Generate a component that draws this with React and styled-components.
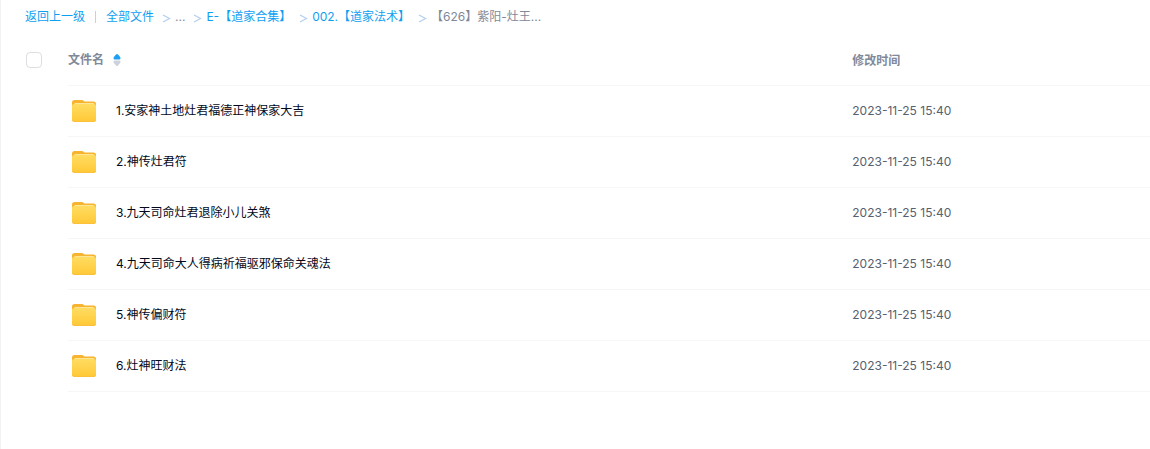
import React from 'react'
import styled, { createGlobalStyle } from 'styled-components'

const GlobalStyle = createGlobalStyle`
    body {
        margin: 0;
        background: #fff;
        font-family: Inter, "Noto Sans CJK SC", sans-serif;
        font-size: 12px;
        line-height: 18px;
    }
`;
const Page = styled.main`
    box-sizing: border-box;
    min-height: 100vh;
    border-left: 1px solid #f1f2f4;
`;
const Breadcrumb = styled.nav`
    display: flex;
    align-items: center;
    height: 34px;
    padding-left: 24px;
    white-space: nowrap;
`;
const Crumb = styled.a`
    color: #0f9ff2;
    text-decoration: none;
`;
const Current = styled.span`
    color: #818999;
`;
const Divider = styled.span`
    width: 1px;
    height: 12px;
    margin: 0 10px;
    background: #b9d3f2;
`;
const Arrow = styled.svg`
    flex: none;
    margin: 2px 4px 0 8px;
    color: #b4d0ee;
`;
const FileTable = styled.table`
    width: 100%;
    table-layout: fixed;
    border-collapse: separate;
    border-spacing: 0;
`;
const CheckCol = styled.col`
    width: 67px;
`;
const TimeCol = styled.col`
    width: 26%;
`;
const HeadCell = styled.th`
    height: 51px;
    padding: 0;
    border-bottom: ${props => props.$plain ? 'none' : '1px solid #f5f6f8'};
    color: #818999;
    font-weight: 600;
    text-align: left;
`;
const Cell = styled.td`
    height: 50px;
    padding: 0;
    border-bottom: ${props => props.$plain ? 'none' : '1px solid #f5f6f8'};
    color: #56606e;
`;
const TimeHead = styled(HeadCell)`
    padding: 2px 0 0 1px;
    height: 49px;
`;
const TimeCell = styled(Cell)`
    padding-left: 1px;
`;
const Checkbox = styled.input`
    appearance: none;
    display: block;
    width: 16px;
    height: 16px;
    margin: 0 0 0 25px;
    border: 1px solid #dcdee3;
    border-radius: 4px;
    background: #fff;
`;
const SortButton = styled.button`
    display: flex;
    align-items: center;
    gap: 9px;
    padding: 0;
    border: 0;
    background: none;
    color: inherit;
    font: inherit;
    cursor: pointer;
`;
const FileName = styled.div`
    display: flex;
    align-items: center;
    gap: 16px;
    padding-left: 2px;
`;
const FileLink = styled.a`
    color: #03081a;
    text-decoration: none;
`;

const crumbs = ['全部文件', '...', 'E-【道家合集】', '002.【道家法术】'];

const files = [
    { name: '1.安家神土地灶君福德正神保家大吉', time: '2023-11-25 15:40' },
    { name: '2.神传灶君符', time: '2023-11-25 15:40' },
    { name: '3.九天司命灶君退除小儿关煞', time: '2023-11-25 15:40' },
    { name: '4.九天司命大人得病祈福驱邪保命关魂法', time: '2023-11-25 15:40' },
    { name: '5.神传偏财符', time: '2023-11-25 15:40' },
    { name: '6.灶神旺财法', time: '2023-11-25 15:40' },
];

function ArrowIcon() {
    return (
        <Arrow width="9" height="9" viewBox="0 0 9 9" fill="none" stroke="currentColor" strokeWidth="1.3" aria-hidden="true">
            <path d="M1 1 L7.5 4.500 L1 8" />
        </Arrow>
    );
}

function SortIcon() {
    return (
        <svg width="8" height="12" viewBox="0 0 8 12" aria-hidden="true">
            <path d="M4 0 Q4.600 0 5 0.500 L7.300 3.300 Q8 5.500 6.500 5.500 H1.500 Q0 5.500 0.700 3.300 L3 0.500 Q3.400 0 4 0 Z" fill="#1d9ff2" />
            <path d="M4 12 Q4.600 12 5 11.500 L7.300 8.700 Q8 6.500 6.500 6.500 H1.500 Q0 6.500 0.700 8.700 L3 11.500 Q3.400 12 4 12 Z" fill="#ccd2dc" />
        </svg>
    );
}

function FolderIcon() {
    return (
        <svg width="30" height="30" viewBox="0 0 30 30" aria-hidden="true">
            <defs>
                <linearGradient id="folderFront" x1="0" y1="0" x2="0" y2="1">
                    <stop offset="0" stopColor="#ffdc61" />
                    <stop offset="1" stopColor="#ffc836" />
                </linearGradient>
            </defs>
            <path d="M2 6.500 Q2 4 4.500 4 H12 Q13.500 4 14.500 5.500 H23.500 Q26 5.500 26 8 V13 H2 Z" fill="#f6b430" />
            <path d="M4 10 V8.500 Q4 7 5.500 7 H23 Q24.500 7 24.500 8.500 V10 Z" fill="#ffe694" />
            <path d="M2 10 Q2 8 4.500 8 H23.500 Q26 8 26 10 V23.500 Q26 26 23.500 26 H4.500 Q2 26 2 23.500 Z" fill="url(#folderFront)" />
            <path d="M2.500 24 Q3 25.500 5 25.500 H23 Q25 25.500 25.500 24" fill="none" stroke="#fcc03a" strokeWidth="1" />
        </svg>
    );
}

export default function App() {
    return (
        <Page>
            <GlobalStyle />
            <Breadcrumb>
                <Crumb href="#">返回上一级</Crumb>
                <Divider />
                {crumbs.map(crumb => (
                    <React.Fragment key={crumb}>
                        {crumb === '...' ? <Current>{crumb}</Current> : <Crumb href="#">{crumb}</Crumb>}
                        <ArrowIcon />
                    </React.Fragment>
                ))}
                <Current>【626】紫阳-灶王...</Current>
            </Breadcrumb>
            <FileTable>
                <colgroup>
                    <CheckCol />
                    <col />
                    <TimeCol />
                </colgroup>
                <thead>
                    <tr>
                        <HeadCell $plain>
                            <Checkbox type="checkbox" aria-label="全选" />
                        </HeadCell>
                        <HeadCell>
                            <SortButton type="button">文件名<SortIcon /></SortButton>
                        </HeadCell>
                        <TimeHead>修改时间</TimeHead>
                    </tr>
                </thead>
                <tbody>
                    {files.map(file => (
                        <tr key={file.name}>
                            <Cell $plain />
                            <Cell>
                                <FileName>
                                    <FolderIcon />
                                    <FileLink href="#">{file.name}</FileLink>
                                </FileName>
                            </Cell>
                            <TimeCell>{file.time}</TimeCell>
                        </tr>
                    ))}
                </tbody>
            </FileTable>
        </Page>
    );
}
